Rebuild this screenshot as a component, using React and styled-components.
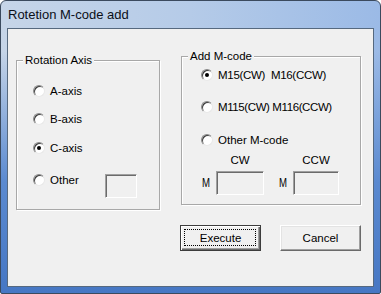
import React from "react";
import styled, { createGlobalStyle } from "styled-components";

const GlobalStyle = createGlobalStyle`
  html, body {
    margin: 0;
    padding: 0;
    background: #fff;
  }
  body {
    font-family: "Liberation Sans", Arial, sans-serif;
    font-size: 11.5px;
    color: #000;
  }
`;

const Window = styled.div`
  box-sizing: border-box;
  width: 381px;
  height: 294px;
  border: 1px solid #3b4a5e;
  border-radius: 6px 6px 2px 2px;
  padding: 0 6px 6px 6px;
  display: flex;
  flex-direction: column;
  background:
    linear-gradient(180deg, rgba(0, 0, 0, 0) 0, rgba(0, 0, 0, 0) 50px, #5b8ad0 180px, #4677c4 100%),
    linear-gradient(90deg, #c6d5e8 0%, #b5cbe8 50%, #9bbae6 100%);
`;

const TitleBar = styled.div`
  height: 27px;
  display: flex;
  align-items: center;
  padding-left: 1px;
  font-size: 13px;
  color: #0b0f18;
`;

const Client = styled.div`
  flex: 1;
  border: 1px solid #56697f;
  background: #f0f0f0;
  display: flex;
  flex-direction: column;
`;

const GroupsRow = styled.div`
  display: flex;
  align-items: flex-start;
  gap: 21px;
  padding: 27px 0 0 8px;
`;

const Group = styled.div`
  position: relative;
  box-sizing: border-box;
  width: ${(p) => p.$w}px;
  height: ${(p) => p.$h}px;
  margin-top: ${(p) => p.$mt || 0}px;
  border: 1px solid #a8a8a8;
  box-shadow: 1px 1px 0 #fff, inset 1px 1px 0 #fff;
  display: flex;
  flex-direction: column;
  padding-left: ${(p) => p.$pl}px;
`;

const Caption = styled.span`
  position: absolute;
  top: -8px;
  left: 6px;
  padding: 0 2px;
  line-height: 14px;
  background: #f0f0f0;
`;

const Row = styled.div`
  display: flex;
  align-items: center;
  height: 16px;
  margin-top: ${(p) => p.$mt}px;
`;

const Radio = styled.span`
  box-sizing: border-box;
  position: relative;
  width: 12px;
  height: 12px;
  border-radius: 50%;
  background: #fff;
  border: 1px solid;
  border-color: #8a8a8a #e8e8e8 #e8e8e8 #8a8a8a;
  box-shadow: inset 1px 1px 0 #3c3c3c;
  flex-shrink: 0;

  &::after {
    content: "";
    display: ${(p) => (p.$checked ? "block" : "none")};
    position: absolute;
    left: 3px;
    top: 3px;
    width: 4px;
    height: 4px;
    border-radius: 50%;
    background: #000;
  }
`;

const RadioText = styled.span`
  margin-left: 5px;
  white-space: pre;
  line-height: 14px;
  letter-spacing: ${(p) => p.$ls || 0}px;
`;

const Box = styled.span`
  box-sizing: border-box;
  display: block;
  width: ${(p) => p.$w}px;
  height: 24px;
  border: 1px solid;
  border-color: #a0a0a0 #fff #fff #a0a0a0;
  box-shadow: inset 1px 1px 0 #6b6b6b;
  background: #f0f0f0;
  margin-left: ${(p) => (p.$auto ? "auto" : "0")};
  margin-top: ${(p) => p.$mt || 0}px;
`;

const OtherRow = styled.div`
  display: flex;
  align-items: flex-start;
  margin-top: 16px;
  padding-right: 22px;
`;

const OtherLabel = styled.div`
  display: flex;
  align-items: center;
  height: 16px;
`;

const FieldsRow = styled.div`
  display: flex;
  gap: 15px;
  margin-top: 5px;
  padding-left: 1px;
`;

const Field = styled.div`
  display: flex;
  flex-direction: column;
`;

const FieldCaption = styled.div`
  line-height: 14px;
  padding-left: 14px;
  text-align: center;
  margin-bottom: 4px;
`;

const FieldInput = styled.div`
  display: flex;
  align-items: center;
  gap: 4px;
`;

const MLabel = styled.span`
  width: 10px;
  font-size: 12px;
  transform: scaleX(0.8);
  transform-origin: left center;
`;

const ButtonRow = styled.div`
  display: flex;
  justify-content: flex-end;
  gap: 19px;
  margin-top: 15px;
  padding-right: 12px;
`;

const Button = styled.button`
  box-sizing: border-box;
  position: relative;
  width: 81px;
  height: 26px;
  padding: 0;
  font-family: inherit;
  font-size: 11.5px;
  color: #000;
  background: #f0f0f0;
  border: 1px solid;
  border-color: ${(p) => (p.$default ? "#3c3c3c" : "#fff #6a6a6a #6a6a6a #fff")};
  box-shadow: ${(p) =>
    p.$default
      ? "inset 1px 1px 0 #fff, inset -1px -1px 0 #6a6a6a, inset -2px -2px 0 #a0a0a0"
      : "inset -1px -1px 0 #a0a0a0, inset 1px 1px 0 #e3e3e3"};

  &::after {
    content: "";
    display: ${(p) => (p.$default ? "block" : "none")};
    position: absolute;
    inset: 3px 4px 4px 3px;
    border: 1px dotted #000;
  }
`;

const App = () => {
  return (
    <>
      <GlobalStyle />
      <Window>
        <TitleBar>Rotetion M-code add</TitleBar>
        <Client>
          <GroupsRow>
            <Group $w={144} $h={150} $mt={4} $pl={16}>
              <Caption>Rotation Axis</Caption>
              <Row $mt={22}>
                <Radio />
                <RadioText>A-axis</RadioText>
              </Row>
              <Row $mt={12}>
                <Radio />
                <RadioText>B-axis</RadioText>
              </Row>
              <Row $mt={13}>
                <Radio $checked />
                <RadioText>C-axis</RadioText>
              </Row>
              <OtherRow>
                <OtherLabel>
                  <Radio />
                  <RadioText>Other</RadioText>
                </OtherLabel>
                <Box $w={32} $auto $mt={2} />
              </OtherRow>
            </Group>

            <Group $w={180} $h={149} $pl={19}>
              <Caption>Add M-code</Caption>
              <Row $mt={10}>
                <Radio $checked />
                <RadioText $ls={-0.3}>{"M15(CW)  M16(CCW)"}</RadioText>
              </Row>
              <Row $mt={16}>
                <Radio />
                <RadioText $ls={-0.4}>{"M115(CW) M116(CCW)"}</RadioText>
              </Row>
              <Row $mt={17}>
                <Radio />
                <RadioText>Other M-code</RadioText>
              </Row>
              <FieldsRow>
                <Field>
                  <FieldCaption>CW</FieldCaption>
                  <FieldInput>
                    <MLabel>M</MLabel>
                    <Box $w={48} />
                  </FieldInput>
                </Field>
                <Field>
                  <FieldCaption>CCW</FieldCaption>
                  <FieldInput>
                    <MLabel>M</MLabel>
                    <Box $w={46} />
                  </FieldInput>
                </Field>
              </FieldsRow>
            </Group>
          </GroupsRow>

          <ButtonRow>
            <Button $default>Execute</Button>
            <Button>Cancel</Button>
          </ButtonRow>
        </Client>
      </Window>
    </>
  );
};

export default App;
